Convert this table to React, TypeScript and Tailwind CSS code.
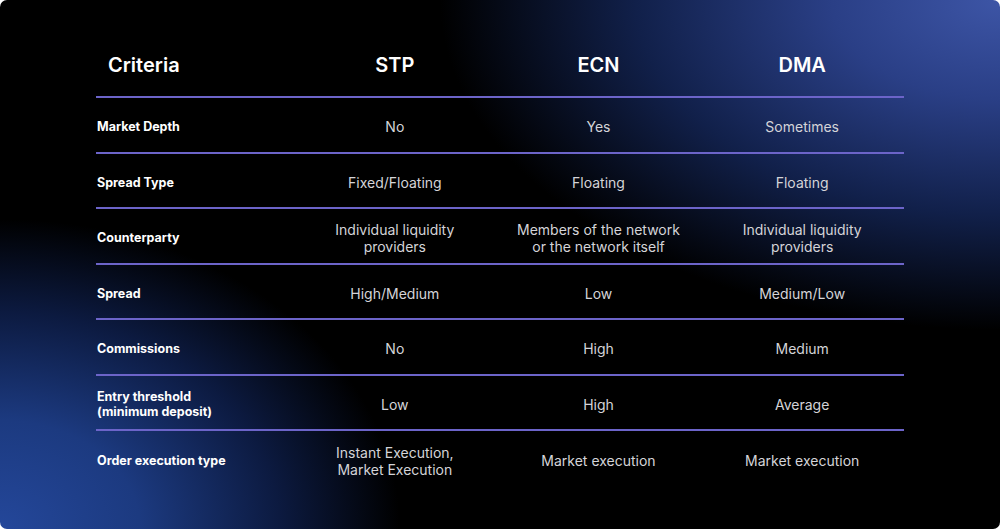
import React from 'react';

const rows: [string[], string[], string[], string[]][] = [
    [['Market Depth'], ['No'], ['Yes'], ['Sometimes']],
    [['Spread Type'], ['Fixed/Floating'], ['Floating'], ['Floating']],
    [['Counterparty'], ['Individual liquidity', 'providers'], ['Members of the network', 'or the network itself'], ['Individual liquidity', 'providers']],
    [['Spread'], ['High/Medium'], ['Low'], ['Medium/Low']],
    [['Commissions'], ['No'], ['High'], ['Medium']],
    [['Entry threshold', '(minimum deposit)'], ['Low'], ['High'], ['Average']],
    [['Order execution type'], ['Instant Execution,', 'Market Execution'], ['Market execution'], ['Market execution']],
];

function Lines({ lines }: { lines: string[] }) {
    return (
        <>
            {lines.map((l, i) => (
                <span key={i} className="block">{l}</span>
            ))}
        </>
    );
}

export default function App() {
    return (
        <div className="w-[1000px] h-[529px] bg-white" style={{ fontFamily: 'Inter, "Noto Sans", sans-serif' }}>
            <div className="w-full h-full rounded-[7px] overflow-hidden bg-black bg-[radial-gradient(ellipse_560px_330px_at_100%_0%,#3d55a6_0%,#2a3f86_30%,#11204a_65%,transparent_100%),radial-gradient(ellipse_400px_310px_at_0%_100%,#24479a_0%,#1c3a80_35%,#0c1a40_70%,transparent_100%)] pt-[34px] px-[96px]">
                <div className="grid grid-cols-[197px_1fr_1fr_1fr] h-[64px] items-center border-b-2 border-[#6c64c9] text-white text-[20px] font-semibold">
                    <div className="pl-[12px] pb-[1px]">Criteria</div>
                    <div className="text-center pb-[1px]">STP</div>
                    <div className="text-center pb-[1px]">ECN</div>
                    <div className="text-center pb-[1px]">DMA</div>
                </div>
                {rows.map((r, i) => (
                    <div
                        key={i}
                        className={`grid grid-cols-[197px_1fr_1fr_1fr] items-center ${i < rows.length - 1 ? 'pt-[4px] h-[55.5px] border-b-2 border-[#6c64c9]' : 'pt-[1px] h-[58px]'}`}
                    >
                        <div className="pl-[1px] text-white text-[12.5px] font-bold leading-[15px]">
                            <Lines lines={r[0]} />
                        </div>
                        <div className="text-center text-[#d4d4d8] text-[14px] leading-[17px]">
                            <Lines lines={r[1]} />
                        </div>
                        <div className="text-center text-[#d4d4d8] text-[14px] leading-[17px]">
                            <Lines lines={r[2]} />
                        </div>
                        <div className="text-center text-[#d4d4d8] text-[14px] leading-[17px]">
                            <Lines lines={r[3]} />
                        </div>
                    </div>
                ))}
            </div>
        </div>
    );
}
